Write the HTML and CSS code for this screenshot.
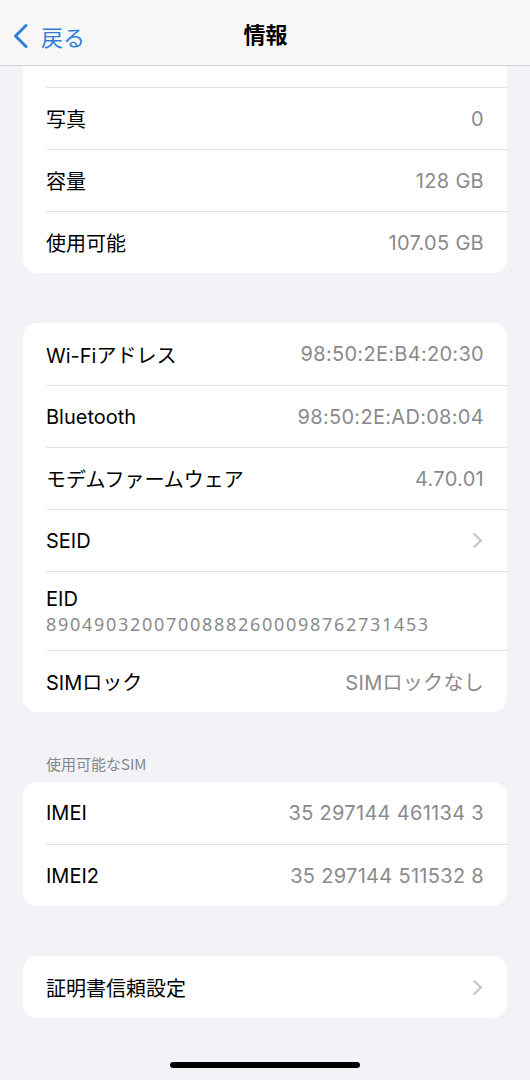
FILE: index.html
```html
<!DOCTYPE html>
<html lang="ja">
<head>
  <meta charset="UTF-8">
  <title>情報</title>
  <link rel="stylesheet" href="styles.css">
</head>
<body>
  <header class="nav-bar">
    <a class="back" href="#">
      <svg class="back-icon" width="18" height="26" viewBox="0 0 18 26">
        <path d="M14 2.5 L3.5 13 L14 23.5" fill="none" stroke="#2f7fd6" stroke-width="3" stroke-linecap="round" stroke-linejoin="round"/>
      </svg>
      <span>戻る</span>
    </a>
    <h1>情報</h1>
  </header>

  <main class="content">
    <section class="card card-top">
      <div class="row row-cut"></div>
      <div class="row"><span class="label">写真</span><span class="value">0</span></div>
      <div class="row"><span class="label">容量</span><span class="value">128 GB</span></div>
      <div class="row"><span class="label">使用可能</span><span class="value">107.05 GB</span></div>
    </section>

    <section class="card">
      <div class="row"><span class="label">Wi-Fiアドレス</span><span class="value">98:50:2E:B4:20:30</span></div>
      <div class="row"><span class="label">Bluetooth</span><span class="value">98:50:2E:AD:08:04</span></div>
      <div class="row"><span class="label">モデムファームウェア</span><span class="value">4.70.01</span></div>
      <div class="row"><span class="label">SEID</span><span class="chevron"></span></div>
      <div class="row row-tall">
        <span class="label">EID</span>
        <span class="sub">89049032007008882600098762731453</span>
      </div>
      <div class="row"><span class="label">SIMロック</span><span class="value">SIMロックなし</span></div>
    </section>

    <h2 class="section-title">使用可能なSIM</h2>
    <section class="card">
      <div class="row"><span class="label">IMEI</span><span class="value">35 297144 461134 3</span></div>
      <div class="row"><span class="label">IMEI2</span><span class="value">35 297144 511532 8</span></div>
    </section>

    <section class="card card-last">
      <div class="row"><span class="label">証明書信頼設定</span><span class="chevron"></span></div>
    </section>
  </main>

  <div class="home-bar"></div>
</body>
</html>
```

FILE: styles.css
```css
body {
  margin: 0;
  background-color: #f2f2f7;
  font-family: Inter, "Noto Sans CJK JP", sans-serif;
  color: #000;
  width: 530px;
  height: 1080px;
  overflow: hidden;
}

.nav-bar {
  height: 65px;
  background-color: #f7f7f7;
  border-bottom: 1px solid #d6d6d8;
  display: flex;
  align-items: center;
  justify-content: center;
  position: relative;
}

.nav-bar h1 {
  margin: 0 0 0 1px;
  font-size: 22px;
  font-weight: 700;
  font-family: "Noto Sans CJK JP", sans-serif;
}

.back {
  position: absolute;
  left: 12px;
  top: 20px;
  display: flex;
  align-items: center;
  gap: 11px;
  color: #2f7fd6;
  text-decoration: none;
  font-size: 22px;
  font-family: "Noto Sans CJK JP", sans-serif;
}

.content {
  padding: 0 23px;
}

.card {
  background: #fff;
  border-radius: 14px;
  margin-top: 50px;
  overflow: hidden;
}

.card-top {
  margin-top: 0;
  border-top-left-radius: 0;
  border-top-right-radius: 0;
}

.row {
  box-sizing: border-box;
  height: 62px;
  margin-left: 23px;
  padding-right: 23px;
  border-top: 1px solid #e2e2e5;
  display: flex;
  align-items: center;
  justify-content: space-between;
}

.card .row:first-child {
  border-top: none;
}

.card-top .row-cut {
  height: 21px;
}

.card-top .row-cut + .row {
  border-top: 1px solid #e2e2e5;
}

.label {
  font-size: 20px;
}

.value {
  font-size: 20px;
  letter-spacing: 0.3px;
  color: #8a8a8e;
}

.row-tall {
  height: 79px;
  flex-direction: column;
  align-items: flex-start;
  justify-content: center;
  gap: 1px;
}

.sub {
  font-family: "Noto Sans", sans-serif;
  font-size: 18px;
  letter-spacing: 1.7px;
  color: #8a8a8e;
}

.chevron {
  width: 9px;
  height: 9px;
  border-top: 2px solid #c4c4c7;
  border-right: 2px solid #c4c4c7;
  transform: rotate(45deg);
  margin-right: 4px;
}

.section-title {
  margin: 41px 0 8px 23px;
  font-size: 15px;
  font-weight: 400;
  color: #86868a;
  font-family: "Noto Sans CJK JP", sans-serif;
}

.section-title + .card {
  margin-top: 0;
}

.home-bar {
  position: absolute;
  left: 170px;
  top: 1062px;
  width: 190px;
  height: 6px;
  border-radius: 3px;
  background: #000;
}
```
